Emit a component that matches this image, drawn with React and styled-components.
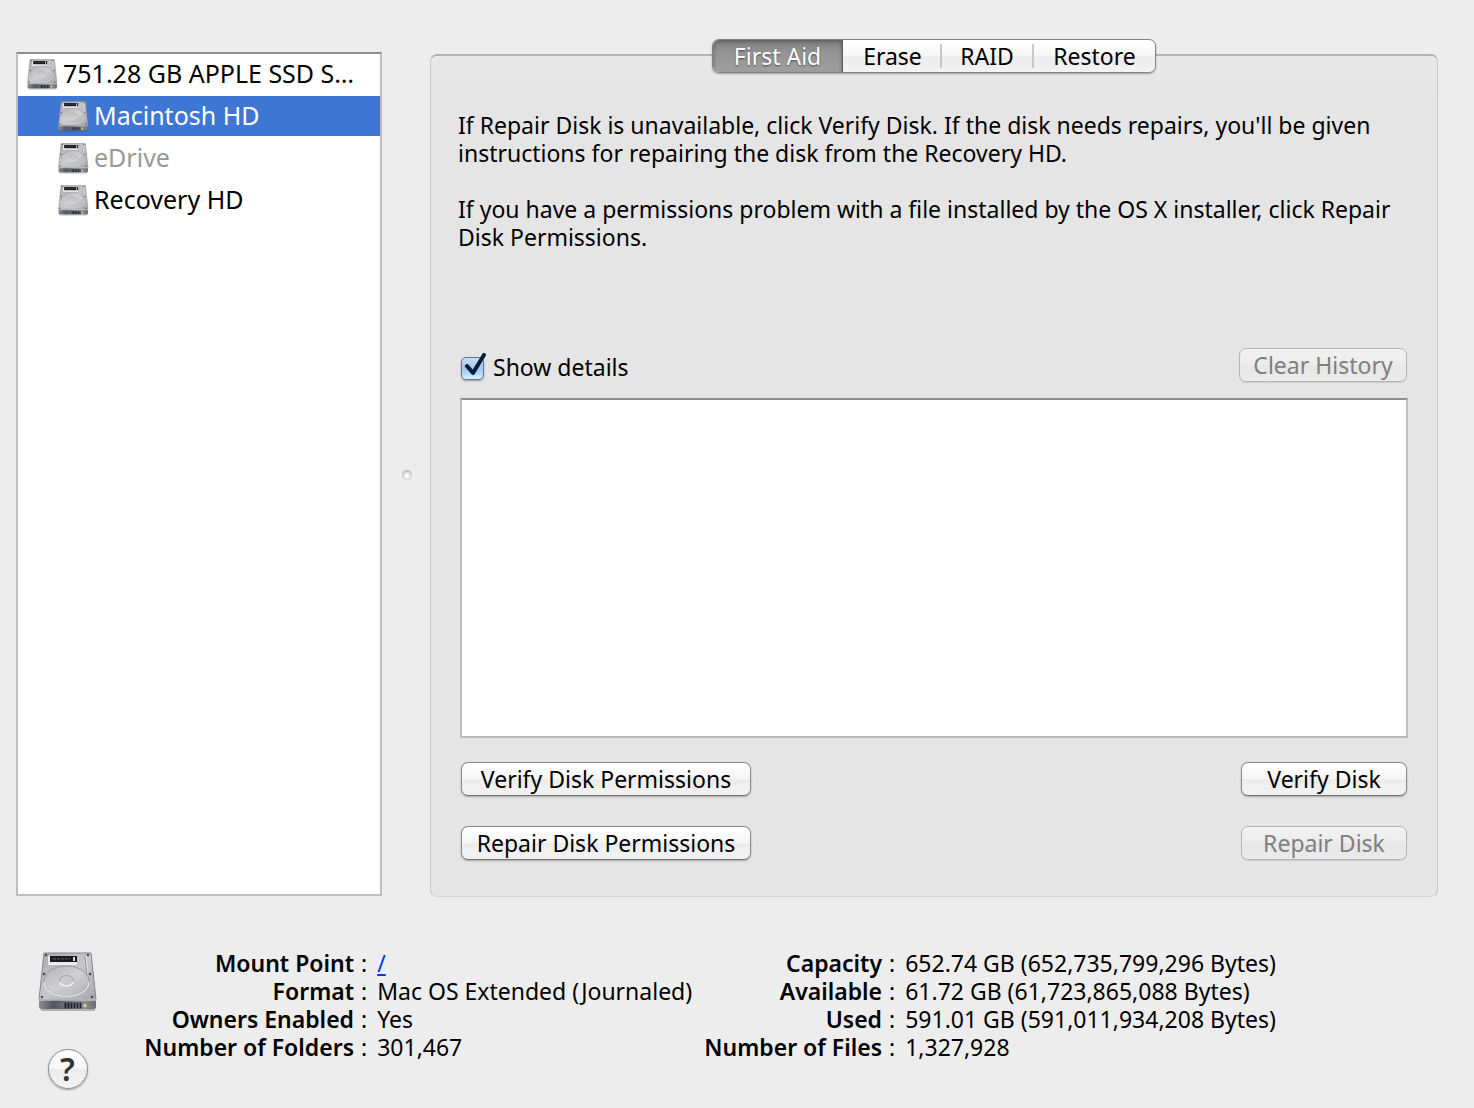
import React, { useState } from "react"
import styled, { createGlobalStyle, css } from "styled-components"

const GlobalStyle = createGlobalStyle`
  *, *::before, *::after {
    box-sizing: border-box;
  }

  body {
    margin: 0;
    background: #ededed;
    color: #000;
    font-family: "Noto Sans", "Open Sans", sans-serif;
    font-size: 23px;
    line-height: 28px;
  }

  button {
    margin: 0;
    font: inherit;
    color: inherit;
  }
`

const well = css`
  background: #fff;
  border: 2px solid #bdbdbd;
  border-top-color: #8e8e8e;
`

const glossy = css`
  background: linear-gradient(#fff 0%, #f6f6f6 50%, #ececec 51%, #f3f3f3 100%);
`

const Window = styled.div`
  min-height: 100vh;
  display: flex;
  flex-direction: column;
  gap: 52px;
  padding: 39px 36px 18px 16px;
`

const Workspace = styled.div`
  display: flex;
`

const Sidebar = styled.ul`
  ${well};
  flex: 0 0 366px;
  margin: 13px 0 1px;
  padding: 0;
  list-style: none;
  display: flex;
  flex-direction: column;
  gap: 2px;
`

const Volume = styled.button`
  width: 100%;
  height: 40px;
  border: none;
  display: flex;
  align-items: center;
  gap: 5px;
  padding: 0 12px 2px ${props => (props.$nested ? 40 : 9)}px;
  background: ${props => (props.$selected ? "#3d76d3" : "transparent")};
  color: ${props => (props.$selected ? "#fff" : "#000")};
  font-size: 25px;
  text-align: left;
  white-space: nowrap;

  svg {
    margin-top: 2px;
  }

  &:disabled {
    color: #999;
  }
`

const Splitter = styled.div`
  flex: 0 0 48px;
  padding: 13px 0 0 2px;
  display: flex;
  align-items: center;
  justify-content: center;
  cursor: col-resize;
`

const Grip = styled.span`
  width: 10px;
  height: 10px;
  border-radius: 50%;
  background: radial-gradient(circle at 50% 60%, #fff 10%, #dedede 45%, #8e8e8e 100%);
`

const TabView = styled.section`
  flex: 1;
  min-width: 0;
  display: flex;
  flex-direction: column;
`

const Tabs = styled.div`
  align-self: center;
  z-index: 1;
  ${glossy};
  height: 34px;
  margin-bottom: -19px;
  display: flex;
  align-items: center;
  border: 1px solid #858585;
  border-radius: 7px;
  box-shadow: 0 1px 2px rgba(0, 0, 0, 0.3);
  overflow: hidden;
`

const Tab = styled.button`
  height: 24px;
  width: ${props => props.$width}px;
  padding: 0;
  border: none;
  border-left: 2px solid #c8c8c8;
  background: transparent;
  line-height: 24px;

  &:first-child,
  [aria-selected="true"] + & {
    border-left-color: transparent;
  }

  &[aria-selected="true"] {
    height: 34px;
    border-left: none;
    border-right: 1px solid #5c5c5c;
    background: linear-gradient(#7c7c7c, #949494 40%, #a0a0a0);
    box-shadow: inset 0 2px 4px rgba(0, 0, 0, 0.35);
    color: #fff;
    text-shadow: 0 1px 2px rgba(0, 0, 0, 0.5);
  }
`

const Pane = styled.div`
  padding: 55px 29px 36px;
  background: linear-gradient(#e8e8e8, #e5e5e5 60px);
  border: 1px solid #c6c6c6;
  border-top: 2px solid #b2b2b2;
  border-bottom-color: #d6d6d6;
  border-radius: 7px;
  display: flex;
  flex-direction: column;
`

const Help = styled.div`
  min-height: 237px;
  padding: 0 8px 0 0;
  margin-left: -2px;

  p {
    margin: 0 0 28px;
  }
`

const Row = styled.div`
  display: flex;
  align-items: center;
  justify-content: space-between;
  padding: 0 1px;
`

const Check = styled.label`
  position: relative;
  margin-top: 4px;
  display: flex;
  align-items: center;
  gap: 9px;

  input {
    appearance: none;
    width: 23px;
    height: 23px;
    margin: 2px 0 0;
    border: 1px solid #70708a;
    border-radius: 5px;
    background: linear-gradient(#c9dff6, #9cc8f2 50%, #a8d4fb 70%, #d6f4ff);
    box-shadow: 0 1px 2px rgba(0, 0, 0, 0.35);
  }

  input:not(:checked) {
    ${glossy};
  }

  svg {
    position: absolute;
    left: 0;
    top: 0;
    pointer-events: none;
  }

  input:not(:checked) + svg {
    display: none;
  }
`

const PushButton = styled.button`
  ${glossy};
  width: ${props => props.$width}px;
  height: 34px;
  padding: 0;
  border: 1px solid #8a8a8a;
  border-bottom-color: #707070;
  border-radius: 7px;
  box-shadow: 0 1px 2px rgba(0, 0, 0, 0.25);
  line-height: 32px;

  &:disabled {
    background: linear-gradient(#f2f2f2, #ececec 50%, #e7e7e7 51%, #ebebeb);
    border-color: #b4b4b4;
    box-shadow: 0 1px 1px rgba(0, 0, 0, 0.1);
    color: #7f7f7f;
  }
`

const Log = styled.div`
  ${well};
  height: 340px;
  margin: 16px 0 24px;
`

const Actions = styled.div`
  display: flex;
  flex-direction: column;
  gap: 30px;
`

const Footer = styled.footer`
  display: flex;
  align-items: flex-start;
`

const Badge = styled.div`
  flex: 0 0 102px;
  display: flex;
  flex-direction: column;
  align-items: center;
  gap: 37px;
  padding: 3px 0 0 1px;
`

const HelpButton = styled.button`
  ${glossy};
  width: 40px;
  height: 40px;
  padding: 0;
  border: 1px solid #8a8a8a;
  border-radius: 50%;
  box-shadow: 0 1px 2px rgba(0, 0, 0, 0.35);
  color: #333;
  font-size: 32px;
  font-weight: 600;
  line-height: 38px;
`

const Facts = styled.dl`
  flex: 0 0 auto;
  width: ${props => props.$width}px;
  margin: 0;
  display: grid;
  grid-template-columns: ${props => props.$label}px 1fr;
  column-gap: 7px;
  white-space: nowrap;

  dt {
    font-weight: 600;
    text-align: right;
  }

  dd {
    margin: 0;
    display: flex;
    gap: 10px;
  }

  a {
    color: #0433ff;
  }
`

const Drive = ({ size }) => (
  <svg width={size} height={size} viewBox="0 0 60 60" aria-hidden="true">
    <defs>
      <linearGradient id="driveTop" x1="0" y1="0" x2="1" y2="1">
        <stop offset="0" stopColor="#a9a9ad" />
        <stop offset="0.5" stopColor="#c8c8cb" />
        <stop offset="1" stopColor="#a8a8ac" />
      </linearGradient>
      <linearGradient id="platter" x1="0" y1="0" x2="1" y2="1">
        <stop offset="0" stopColor="#b4b4b8" />
        <stop offset="0.5" stopColor="#cfcfd2" />
        <stop offset="1" stopColor="#b0b0b4" />
      </linearGradient>
      <linearGradient id="driveFront" x1="0" y1="0" x2="1" y2="0">
        <stop offset="0" stopColor="#8b8b95" />
        <stop offset="0.25" stopColor="#565662" />
        <stop offset="0.8" stopColor="#8d8d98" />
        <stop offset="1" stopColor="#6c6c76" />
      </linearGradient>
    </defs>
    <path d="M2 57h56l-2 2H4z" fill="#000" opacity="0.25" />
    <path d="M6 1h47l5 46.500H1z" fill="url(#driveTop)" stroke="#85858b" strokeWidth="1" />
    <path d="M1 48h57v7q0 2-3 2H4q-3 0-3-2z" fill="url(#driveFront)" />
    <path d="M1 48h57" stroke="#e0e0e4" strokeWidth="1" />
    <ellipse cx="28.500" cy="29" rx="22.500" ry="15" fill="url(#platter)" stroke="#98989e" strokeWidth="1" />
    <path d="M6 30C7 49 50 49 51 30" fill="none" stroke="#e9e9ec" strokeWidth="1.200" />
    <path d="M10 4v9h28l1-3H12V4z" fill="#ededf0" />
    <path d="M12 4h27v6H12z" fill="#1b1b1e" />
    <path d="M15 7h17" stroke="#606064" strokeWidth="1" strokeDasharray="3 1" />
    <path d="M35 5h2v4h-2z" fill="#ddd" />
    <path d="M47 4l2 18" stroke="#8b8b91" strokeWidth="1" />
    <path d="M48 4l2 18" stroke="#e6e6e9" strokeWidth="1" />
    <ellipse cx="28.500" cy="28.500" rx="7" ry="5" fill="#c9c9cd" stroke="#a0a0a6" strokeWidth="1" />
    <path d="M22 30c1 5 12 5 13 0" fill="none" stroke="#f4f4f6" strokeWidth="1.500" />
    <path d="M27.500 50.500v6M30.500 50.500v6M33.500 50.500v6M36.500 50.500v6M39.500 50.500v6M42.500 50.500v6" stroke="#202026" strokeWidth="1.800" />
    <circle cx="47" cy="53.500" r="1.500" fill="#dede6c" />
    {[[8, 3], [50, 3], [6, 22], [52, 22], [4, 45], [54, 45]].map(([x, y]) => (
      <circle key={`${x}-${y}`} cx={x} cy={y} r="1.300" fill="#4b4b51" />
    ))}
  </svg>
)

const volumes = [
  { name: "751.28 GB APPLE SSD S…" },
  { name: "Macintosh HD", nested: true },
  { name: "eDrive", nested: true, disabled: true },
  { name: "Recovery HD", nested: true }
]

const tabs = [
  { name: "First Aid", width: 130 },
  { name: "Erase", width: 97 },
  { name: "RAID", width: 92 },
  { name: "Restore", width: 123 }
]

const leftFacts = [
  ["Mount Point", <a href="#root">/</a>],
  ["Format", "Mac OS Extended (Journaled)"],
  ["Owners Enabled", "Yes"],
  ["Number of Folders", "301,467"]
]

const rightFacts = [
  ["Capacity", "652.74 GB (652,735,799,296 Bytes)"],
  ["Available", "61.72 GB (61,723,865,088 Bytes)"],
  ["Used", "591.01 GB (591,011,934,208 Bytes)"],
  ["Number of Files", "1,327,928"]
]

const FactList = ({ facts, label, width }) => (
  <Facts $label={label} $width={width}>
    {facts.map(([name, value]) => (
      <React.Fragment key={name}>
        <dt>{name}</dt>
        <dd>
          <span>:</span>
          <span>{value}</span>
        </dd>
      </React.Fragment>
    ))}
  </Facts>
)

const App = () => {
  const [selected, setSelected] = useState("Macintosh HD")
  const [tab, setTab] = useState("First Aid")
  const [details, setDetails] = useState(true)

  return (
    <>
      <GlobalStyle />
      <Window>
        <Workspace>
          <Sidebar>
            {volumes.map(({ name, nested, disabled }) => (
              <li key={name}>
                <Volume
                  $nested={nested}
                  $selected={selected === name}
                  disabled={disabled}
                  onClick={() => setSelected(name)}
                >
                  <Drive size={31} />
                  {name}
                </Volume>
              </li>
            ))}
          </Sidebar>
          <Splitter>
            <Grip />
          </Splitter>
          <TabView>
            <Tabs role="tablist">
              {tabs.map(({ name, width }) => (
                <Tab
                  key={name}
                  role="tab"
                  $width={width}
                  aria-selected={tab === name}
                  onClick={() => setTab(name)}
                >
                  {name}
                </Tab>
              ))}
            </Tabs>
            <Pane role="tabpanel">
              <Help>
                <p>
                  If Repair Disk is unavailable, click Verify Disk. If the disk needs repairs,
                  you'll be given instructions for repairing the disk from the Recovery HD.
                </p>
                <p>
                  If you have a permissions problem with a file installed by the OS X installer,
                  click Repair Disk Permissions.
                </p>
              </Help>
              <Row>
                <Check htmlFor="details">
                  <input
                    id="details"
                    type="checkbox"
                    checked={details}
                    onChange={e => setDetails(e.target.checked)}
                  />
                  <svg width="27" height="27" viewBox="0 0 27 27" aria-hidden="true">
                    <path
                      d="M6 13l6 7L23 2"
                      fill="none"
                      stroke="#061c38"
                      strokeWidth="4"
                      strokeLinecap="round"
                      strokeLinejoin="round"
                    />
                  </svg>
                  Show details
                </Check>
                <PushButton $width={168} disabled>
                  Clear History
                </PushButton>
              </Row>
              <Log />
              <Row>
                <Actions>
                  <PushButton $width={290}>Verify Disk Permissions</PushButton>
                  <PushButton $width={290}>Repair Disk Permissions</PushButton>
                </Actions>
                <Actions>
                  <PushButton $width={166}>Verify Disk</PushButton>
                  <PushButton $width={166} disabled>
                    Repair Disk
                  </PushButton>
                </Actions>
              </Row>
            </Pane>
          </TabView>
        </Workspace>
        <Footer>
          <Badge>
            <Drive size={60} />
            <HelpButton aria-label="Help">?</HelpButton>
          </Badge>
          <FactList facts={leftFacts} label={236} width={528} />
          <FactList facts={rightFacts} label={236} width={650} />
        </Footer>
      </Window>
    </>
  )
}

export default App
